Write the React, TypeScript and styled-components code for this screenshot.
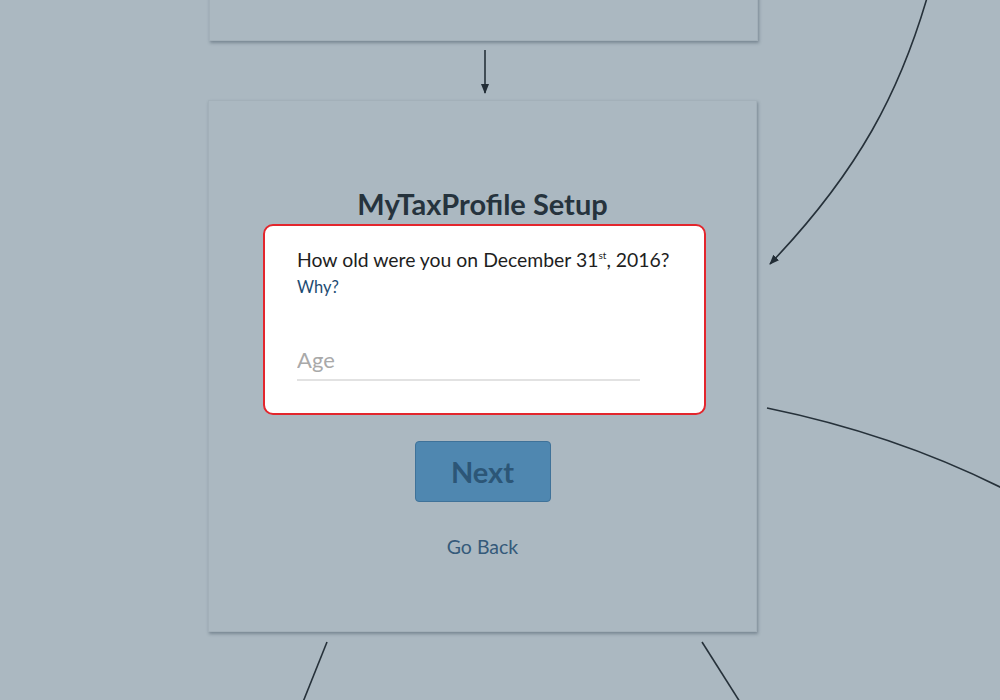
import React from "react";
import styled, { createGlobalStyle } from "styled-components";

const Global = createGlobalStyle`
  html, body { margin: 0; padding: 0; }
  body { background: #abb8c1; font-family: Lato, "Open Sans", sans-serif; }
`;

const Canvas = styled.div`
  position: relative;
  width: 1000px;
  height: 700px;
  overflow: hidden;
  background: #abb8c1;
`;

const Node = styled.div<{ $x: number; $y: number; $w: number; $h: number }>`
  position: absolute;
  left: ${(p) => p.$x}px;
  top: ${(p) => p.$y}px;
  width: ${(p) => p.$w}px;
  height: ${(p) => p.$h}px;
  box-sizing: border-box;
  background: #abb8c1;
  border: 1px solid #a3b0b9;
  box-shadow: 1px 2px 3px rgba(60, 75, 90, 0.45);
  display: flex;
  flex-direction: column;
  align-items: center;
`;

const Wires = styled.svg`
  position: absolute;
  left: 0;
  top: 0;
  width: 1000px;
  height: 700px;
  pointer-events: none;
`;

const Title = styled.h1`
  margin: 85px 0 0;
  font-family: Lato, sans-serif;
  font-weight: 700;
  font-size: 29px;
  line-height: 36px;
  color: #26333d;
`;

const Panel = styled.div`
  margin: 2px 0 0 4px;
  width: 443px;
  height: 191px;
  box-sizing: border-box;
  background: #fff;
  border: 2px solid #e3262d;
  border-radius: 10px;
  padding: 21px 32px 0;
  display: flex;
  flex-direction: column;
`;

const Question = styled.div`
  font-size: 19.4px;
  line-height: 25px;
  color: #1e1e1e;
  sup {
    font-size: 10px;
    line-height: 0;
    vertical-align: 8px;
  }
`;

const Why = styled.a`
  margin-top: 5px;
  font-size: 16.5px;
  line-height: 21px;
  color: #1d4b72;
  text-decoration: none;
`;

const AgeInput = styled.input`
  margin-top: 41px;
  width: 343px;
  height: 42px;
  box-sizing: border-box;
  border: none;
  border-bottom: 2px solid #e2e2e2;
  padding: 0;
  font-family: Lato, sans-serif;
  font-size: 22px;
  color: #333;
  outline: none;
  background: transparent;
  &::placeholder { color: #a9a9a9; }
`;

const NextButton = styled.button`
  margin-top: 26px;
  width: 136px;
  height: 61px;
  box-sizing: border-box;
  background: #4f87b0;
  border: 1px solid #3f7299;
  border-radius: 4px;
  font-family: Lato, sans-serif;
  font-weight: 700;
  font-size: 29px;
  color: #2c5677;
  cursor: default;
`;

const GoBack = styled.a`
  margin-top: 33px;
  font-size: 19.5px;
  line-height: 24px;
  color: #355a7a;
  text-decoration: none;
`;

export default function App() {
  return (
    <>
      <Global />
      <Canvas>
        <Node $x={209} $y={-20} $w={549} $h={61} />
        <Node $x={208} $y={100} $w={549} $h={532}>
          <Title>MyTaxProfile Setup</Title>
          <Panel>
            <Question>
              How old were you on December 31<sup>st</sup>, 2016?
            </Question>
            <Why href="#">Why?</Why>
            <AgeInput placeholder="Age" />
          </Panel>
          <NextButton>Next</NextButton>
          <GoBack href="#">Go Back</GoBack>
        </Node>
        <Wires viewBox="0 0 1000 700">
          <defs>
            <marker id="ah" markerWidth="10" markerHeight="10" refX="9" refY="5" orient="auto" markerUnits="userSpaceOnUse">
              <path d="M0,1 L10,5 L0,9 Z" fill="#222d36" />
            </marker>
          </defs>
          <g stroke="#26313a" strokeWidth="1.6" fill="none">
            <line x1="485" y1="50" x2="485" y2="93" markerEnd="url(#ah)" />
            <path d="M927,-2 C900,90 860,170 770,264" markerEnd="url(#ah)" />
            <path d="M767,408 C850,425 930,452 1002,488" />
            <line x1="327" y1="642" x2="303" y2="702" />
            <line x1="702" y1="642" x2="740" y2="702" />
          </g>
        </Wires>
      </Canvas>
    </>
  );
}
